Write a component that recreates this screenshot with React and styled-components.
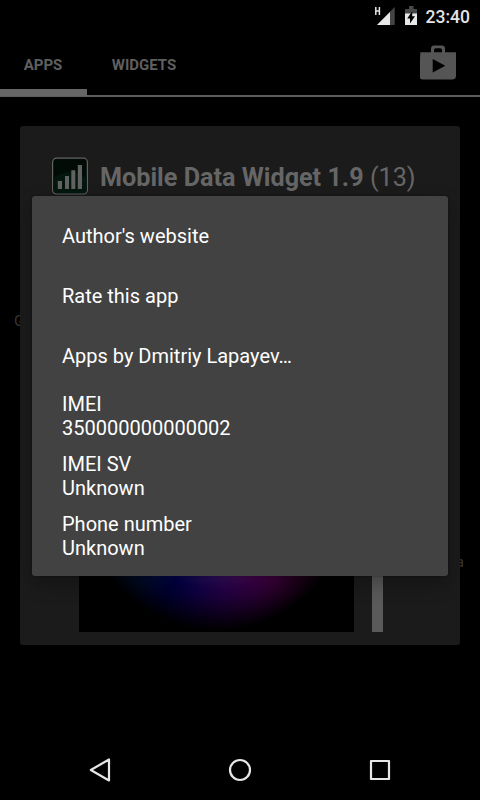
import styled, { createGlobalStyle, css } from "styled-components";

const GlobalStyle = createGlobalStyle`
  * {
    box-sizing: border-box;
  }
  body {
    margin: 0;
    background: #000;
    font-family: Roboto, sans-serif;
  }
`;

const Screen = styled.div`
  position: relative;
  display: flex;
  flex-direction: column;
  width: 480px;
  height: 800px;
  overflow: hidden;
  background: #000;
`;

const StatusBar = styled.div`
  display: flex;
  justify-content: flex-end;
  height: 33px;
  padding-right: 10px;
`;

const StatusIcons = styled.svg`
  width: 50px;
  height: 33px;
  margin-right: 5.5px;
`;

const Clock = styled.span`
  width: 44.5px;
  font-size: 17.5px;
  font-weight: 500;
  line-height: 35px;
  color: #e4e4e4;
  white-space: nowrap;
`;

const TabBar = styled.div`
  display: flex;
  height: 64px;
  background: linear-gradient(#5c5c5c, #5c5c5c) 0 62px / 100% 2px no-repeat;
`;

const Tab = styled.div`
  display: flex;
  align-items: center;
  justify-content: center;
  width: ${(props) => props.$width}px;
  height: 64px;
  font-size: 15px;
  font-weight: 700;
  color: #5f5f5f;
  ${(props) =>
    props.$active &&
    css`
      padding-right: 1px;
      background: linear-gradient(#666, #666) 0 56px / 100% 7px no-repeat;
    `}
`;

const StoreButton = styled.svg`
  width: 36px;
  height: 36px;
  margin: 11px 24px 0 auto;
`;

const Content = styled.div`
  position: relative;
  flex: 1;
  display: flex;
  flex-direction: column;
  justify-content: space-between;
  padding: 215px 16px 169px 14px;
  font-size: 15px;
  line-height: 18px;
  color: #383838;
`;

const PageText = styled.span`
  align-self: ${(props) => (props.$end ? "flex-end" : "flex-start")};
`;

const Card = styled.div`
  position: absolute;
  top: 29px;
  left: 20px;
  display: flex;
  flex-direction: column;
  justify-content: space-between;
  width: 440px;
  height: 519px;
  padding: 31px 32px 13px;
  border-radius: 3px;
  background: #1b1b1b;
`;

const CardHeader = styled.div`
  display: flex;
  align-items: center;
  gap: 12px;
  height: 38px;
`;

const AppIcon = styled.svg`
  width: 36px;
  height: 38px;
`;

const Title = styled.h1`
  margin: 4px 0 0;
  font-size: 25.2px;
  font-weight: 700;
  line-height: 30px;
  color: #666;
  white-space: nowrap;
`;

const Version = styled.span`
  font-weight: 400;
`;

const Picker = styled.div`
  display: flex;
  gap: 18px;
  height: 275px;
  padding-left: 27px;
`;

const WheelBox = styled.div`
  width: 275px;
  background: #000;
`;

const Wheel = styled.div`
  width: 275px;
  height: 275px;
  border-radius: 50%;
  background:
    linear-gradient(rgba(0, 0, 0, 0.6), rgba(0, 0, 0, 0.6)),
    radial-gradient(circle closest-side, transparent 56%, #000 99%),
    radial-gradient(circle closest-side, #fff, rgba(255, 255, 255, 0) 70%),
    conic-gradient(from 206deg, #00f, #0ff, #0f0, #ff0, #f00, #f0f, #00f);
`;

const ValueBar = styled.div`
  width: 11px;
  background: #5a5a5a;
`;

const Dialog = styled.div`
  position: absolute;
  top: 196px;
  left: 32px;
  width: 415.5px;
  height: 379.5px;
  padding: 10px 0;
  border-radius: 3px;
  background: #424242;
  box-shadow: 0 8px 20px rgba(0, 0, 0, 0.28), 0 0 2px rgba(0, 0, 0, 0.4);
`;

const Item = styled.div`
  display: flex;
  flex-direction: column;
  justify-content: center;
  height: 60px;
  padding: 0 30px;
  font-size: 20px;
  line-height: 24px;
  color: #fff;
`;

const NavBar = styled.div`
  height: 60px;
`;

const items = [
  ["Author's website"],
  ["Rate this app"],
  ["Apps by Dmitriy Lapayev…"],
  ["IMEI", "350000000000002"],
  ["IMEI SV", "Unknown"],
  ["Phone number", "Unknown"],
];

const App = () => {
  return (
    <>
      <GlobalStyle />
      <Screen>
        <StatusBar>
          <StatusIcons viewBox="370 0 50 33">
            <path d="M375.8 7v8M379.4 7v8M375.8 11h3.6" stroke="#e4e4e4" strokeWidth="1.5" fill="none" />
            <path d="M377 25 394.7 7v18z" fill="#444" />
            <path d="M377 25 390 12v13z" fill="#e8e8e8" />
            <path d="M405 9h4V6h4.5v3h3.5v5h-12z" fill="#484848" />
            <path d="M405 13.500h12v11.500h-12z" fill="#e8e8e8" />
            <path d="M412.2 11.2v5h2.8l-5 7.2v-5h-2.8z" fill="#000" />
          </StatusIcons>
          <Clock>23:40</Clock>
        </StatusBar>
        <TabBar>
          <Tab $active $width={87}>APPS</Tab>
          <Tab $width={114}>WIDGETS</Tab>
          <StoreButton viewBox="420 44 36 36">
            <path
              fillRule="evenodd"
              fill="#555"
              d="M420.3 52.300H431v-3.500q0-3.300 3.300-3.300h7.400q3.300 0 3.300 3.300v3.500h11v23.500q0 3.700-3.700 3.700h-29.300q-3.700 0-3.700-3.700zM434 52.300h8v-2.300q0-1.700-1.700-1.700h-4.600q-1.700 0-1.700 1.700zM432.700 59v13.400L445.300 65.700z"
            />
          </StoreButton>
        </TabBar>
        <Content>
          <PageText>G</PageText>
          <PageText $end>a</PageText>
          <Card>
            <CardHeader>
              <AppIcon viewBox="0 0 36 38">
                <rect x="0.6" y="1.200" width="34.800" height="35.800" rx="4" fill="#020c06" stroke="#626262" strokeWidth="1.200" />
                <path d="M1.500 21Q18 9 34.500 21V33q0 3-3 3h-27q-3 0-3-3z" fill="#03170e" />
                <path d="M5.800 24h4.200v8H5.800zM13 19h4v13h-4zM19.300 13.300h4V32h-4zM25.800 8H30v24h-4.200z" fill="#626262" />
              </AppIcon>
              <Title>
                Mobile Data Widget 1.9 <Version>(13)</Version>
              </Title>
            </CardHeader>
            <Picker>
              <WheelBox>
                <Wheel />
              </WheelBox>
              <ValueBar />
            </Picker>
          </Card>
        </Content>
        <NavBar>
          <svg width="480" height="60" fill="none" stroke="#e6e6e6" strokeWidth="2.200" strokeLinejoin="round">
            <path d="M90.800 30 109 19.500v21z" />
            <circle cx="240" cy="30" r="10" />
            <rect x="371" y="21" width="18" height="18" />
          </svg>
        </NavBar>
        <Dialog>
          {items.map(([label, value]) => (
            <Item key={label}>
              <span>{label}</span>
              {value && <span>{value}</span>}
            </Item>
          ))}
        </Dialog>
      </Screen>
    </>
  );
};

export default App;
